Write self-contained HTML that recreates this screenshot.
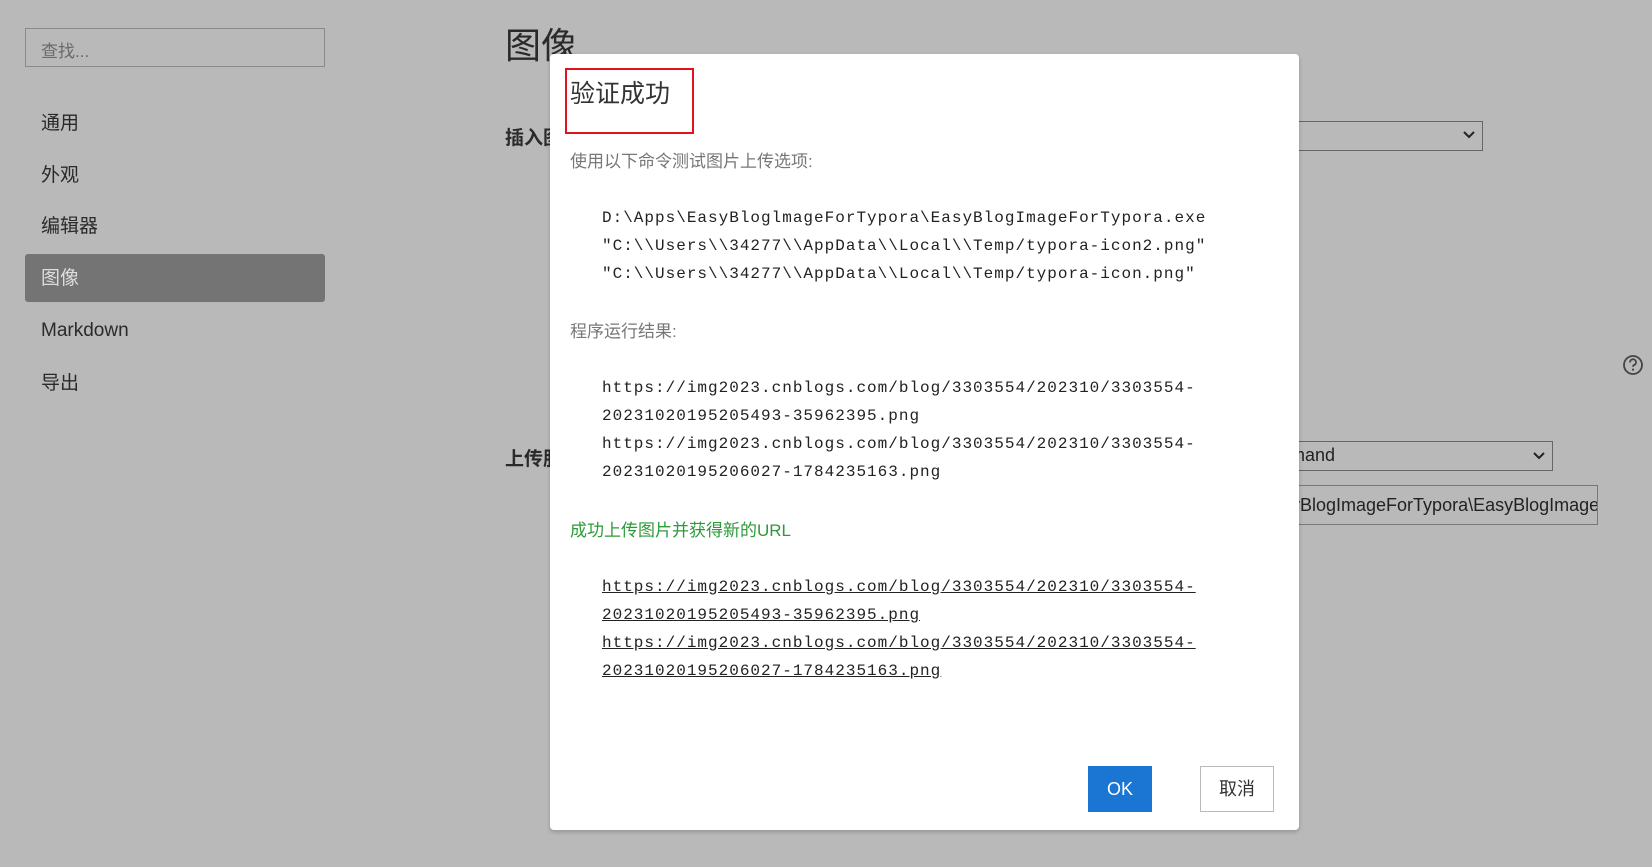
<!DOCTYPE html>
<html><head><meta charset="utf-8"><style>
*{margin:0;padding:0;box-sizing:border-box}
body{width:1652px;height:867px;background:#b9b9b9;position:relative;overflow:hidden;font-family:"Liberation Sans","Noto Sans CJK SC",sans-serif;color:#333}
.a{position:absolute;white-space:nowrap}
.nav{left:41px;font-size:19px;color:#2a2a2a;line-height:24px}
.mono{font-family:"Liberation Mono","Noto Sans CJK SC",monospace;font-size:16px;letter-spacing:1px;color:#222;left:602px;line-height:20px}
.gray{left:570px;font-size:17px;color:#777;line-height:22px}
u{text-decoration:underline}
</style></head><body>
<div class="a" style="left:25px;top:28px;width:300px;height:39px;border:1px solid #8a8a8a"></div>
<div class="a" style="left:41px;top:37px;font-size:17px;color:#6a6a6a">查找...</div>
<div class="a nav" style="top:112px">通用</div>
<div class="a nav" style="top:164px">外观</div>
<div class="a nav" style="top:215px">编辑器</div>
<div class="a" style="left:25px;top:254px;width:300px;height:48px;background:#747474;border-radius:3px"></div>
<div class="a nav" style="top:267px;color:#ddd">图像</div>
<div class="a nav" style="top:319px">Markdown</div>
<div class="a nav" style="top:372px">导出</div>
<div class="a" style="left:505px;top:26px;font-size:36px;color:#2a2a2a;line-height:40px">图像</div>
<div class="a" style="left:505px;top:123px;font-size:19px;font-weight:bold;color:#2a2a2a">插入图</div>
<div class="a" style="left:505px;top:444px;font-size:19px;font-weight:bold;color:#2a2a2a">上传服</div>
<div class="a" style="left:1260px;top:121px;width:223px;height:30px;border:1px solid #666"></div>
<svg class="a" style="left:1462px;top:130px" width="14" height="10"><path d="M2 2l5 5 5-5" stroke="#222" stroke-width="2" fill="none"/></svg>
<div class="a" style="left:1260px;top:441px;width:293px;height:30px;border:1px solid #666"></div>
<div class="a" style="left:1290px;top:445px;font-size:18px;color:#222">mand</div>
<svg class="a" style="left:1532px;top:451px" width="14" height="10"><path d="M2 2l5 5 5-5" stroke="#222" stroke-width="2" fill="none"/></svg>
<div class="a" style="left:1260px;top:485px;width:338px;height:40px;border:1px solid #777;overflow:hidden"><div style="position:absolute;left:30px;top:9px;font-size:18px;color:#222;white-space:nowrap">yBlogImageForTypora\EasyBlogImage</div></div>
<svg class="a" style="left:1622px;top:354px" width="22" height="22"><circle cx="11" cy="11" r="9" stroke="#444" stroke-width="1.8" fill="none"/><path d="M8 8.5a3 3 0 1 1 4 2.6c-.8.4-1 .9-1 1.7" stroke="#444" stroke-width="1.8" fill="none"/><circle cx="11" cy="15.6" r="1.1" fill="#444"/></svg>

<div class="a" style="left:550px;top:54px;width:749px;height:776px;background:#fff;border-radius:4px;box-shadow:0 2px 4px rgba(0,0,0,.2)"></div>
<div class="a" style="left:565px;top:68px;width:129px;height:66px;border:2px solid #e0141e"></div>
<div class="a" style="left:570px;top:79px;font-size:25px;color:#333;line-height:30px">验证成功</div>
<div class="a gray" style="top:151px">使用以下命令测试图片上传选项:</div>
<div class="a mono" style="top:208px">D:\Apps\EasyBloglmageForTypora\EasyBlogImageForTypora.exe</div>
<div class="a mono" style="top:236px">"C:\\Users\\34277\\AppData\\Local\\Temp/typora-icon2.png"</div>
<div class="a mono" style="top:264px">"C:\\Users\\34277\\AppData\\Local\\Temp/typora-icon.png"</div>
<div class="a gray" style="top:321px">程序运行结果:</div>
<div class="a mono" style="top:378px">https://img2023.cnblogs.com/blog/3303554/202310/3303554-</div>
<div class="a mono" style="top:406px">20231020195205493-35962395.png</div>
<div class="a mono" style="top:434px">https://img2023.cnblogs.com/blog/3303554/202310/3303554-</div>
<div class="a mono" style="top:462px">20231020195206027-1784235163.png</div>
<div class="a gray" style="top:520px;color:#2e9a3a">成功上传图片并获得新的URL</div>
<div class="a mono" style="top:577px"><u>https://img2023.cnblogs.com/blog/3303554/202310/3303554-</u></div>
<div class="a mono" style="top:605px"><u>20231020195205493-35962395.png</u></div>
<div class="a mono" style="top:633px"><u>https://img2023.cnblogs.com/blog/3303554/202310/3303554-</u></div>
<div class="a mono" style="top:661px"><u>20231020195206027-1784235163.png</u></div>
<div class="a" style="left:1088px;top:766px;width:64px;height:46px;background:#1a76d2;color:#fff;font-size:18px;text-align:center;line-height:46px">OK</div>
<div class="a" style="left:1200px;top:766px;width:74px;height:46px;border:1px solid #bbb;color:#333;font-size:18px;text-align:center;line-height:44px">取消</div>
</body></html>
